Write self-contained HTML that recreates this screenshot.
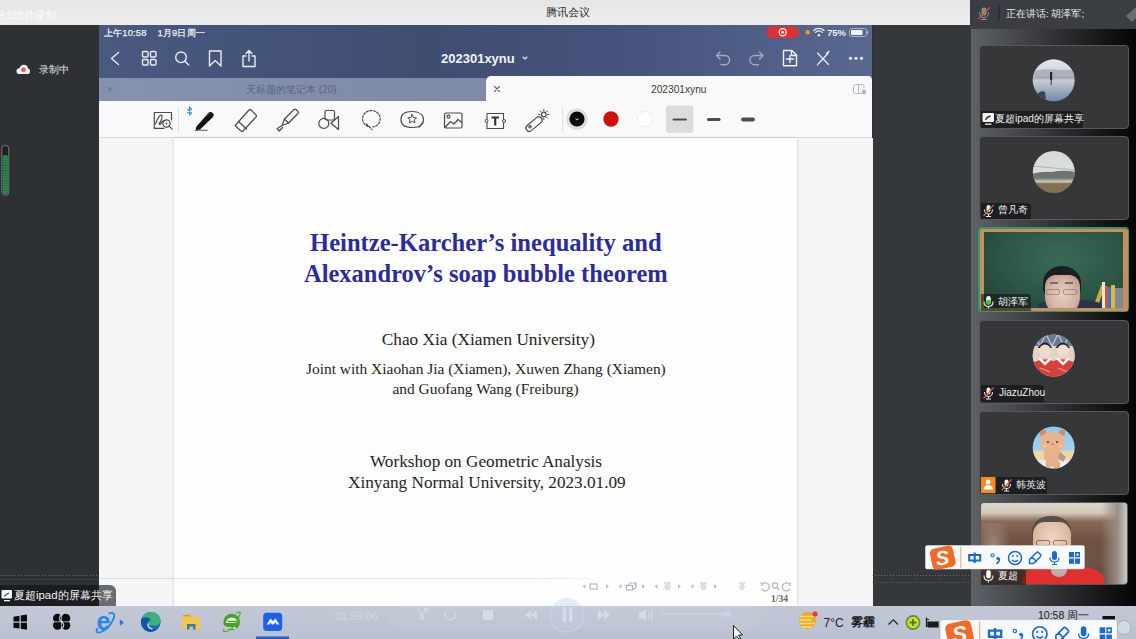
<!DOCTYPE html>
<html><head><meta charset="utf-8">
<style>
*{margin:0;padding:0;box-sizing:border-box}
html,body{width:1136px;height:639px;overflow:hidden;background:#2d3034;font-family:"Liberation Sans",sans-serif}
.a{position:absolute}
svg{position:absolute;overflow:visible}
#topbar{left:0;top:0;width:1136px;height:25px;background:linear-gradient(#e6e6e6,#ededed)}
#leftp{left:0;top:25px;width:99px;height:581px;background:#2e3134}
#nav{left:99px;top:25px;width:773px;height:53px;background:linear-gradient(90deg,#495980,#3f4d71 42%,#44527b 65%,#58688f)}
#tabin{left:99px;top:78px;width:387px;height:23.5px;background:linear-gradient(90deg,#8592ad,#7e8ba7)}
#tabact{left:486px;top:76px;width:386px;height:25px;background:#f9f9fb;border-radius:5px 4px 0 0}
#tool{left:99px;top:101px;width:773px;height:37px;background:#f9f9fb;border-bottom:1px solid #dcdcde}
#canvas{left:99px;top:138px;width:774px;height:468px;background:#f5f5f6}
#page{left:174px;top:138px;width:623px;height:468px;background:#fefefe;box-shadow:0 0 2.5px rgba(0,0,0,.22)}
#gap{left:873px;top:25px;width:98px;height:581px;background:#34383b}
#rhead{left:970px;top:0;width:166px;height:29px;background:#3a3d41}
#rpanel{left:971px;top:28.5px;width:165px;height:577px;background:linear-gradient(90deg,#5e6266,#3a3c3f 40%,#161616 80%,#050505)}
.tl{width:150px;height:84px;background:#363739;border:1px solid #56585c;border-radius:4px}
.lbl{height:16.5px;background:#1d1e20;border-radius:0 4px 0 0}
.lt{font-size:10px;color:#f0f0f0}
#taskbar{left:0;top:606px;width:1136px;height:33px;background:linear-gradient(#c2c8d6,#bac1d1)}
.t{position:absolute;white-space:nowrap;line-height:1}
.serif{font-family:"Liberation Serif",serif}
</style></head><body>
<div id="topbar" class="a"></div>
<div class="t" style="left:-2px;top:10px;font-size:11px;color:#fbfbfb">9.9软件录制</div>
<div class="t" style="left:546px;top:7px;font-size:11px;color:#2a2a2a">腾讯会议</div>

<div id="leftp" class="a"></div>
<div class="t" style="left:39px;top:64.5px;font-size:10px;color:#e4e4e4">录制中</div>
<svg width="1136" height="639" style="left:0;top:0" viewBox="0 0 1136 639">
 <path d="M19.5 74 Q16.5 74 16.5 71.2 Q16.5 68.5 19.5 68.3 Q20.5 64.8 24 64.8 Q27.2 64.8 28 68.2 Q30 68.5 30 71.2 Q30 74 27.5 74 Z" fill="#f4f4f4"/>
 <circle cx="23.5" cy="69.8" r="2.4" fill="#f05a50"/>
 <rect x="1.8" y="145.5" width="7" height="49.5" rx="3.5" fill="#1e2022" stroke="#6d7176" stroke-width="1.1"/>
 <rect x="2.6" y="155" width="5.4" height="39" rx="2.5" fill="#2a8a50"/>
 <g stroke="#164a2a" stroke-width="0.6" opacity="0.7">
  <path d="M3 158 H8 M3 160.5 H8 M3 163 H8 M3 165.5 H8 M3 168 H8 M3 170.5 H8 M3 173 H8 M3 175.5 H8 M3 178 H8 M3 180.5 H8 M3 183 H8 M3 185.5 H8 M3 188 H8 M3 190.5 H8"/>
 </g>
</svg>
<!-- IPAD CHROME -->
<div id="nav" class="a"></div>
<div id="tabin" class="a"></div>
<div id="tabact" class="a"></div>
<div id="tool" class="a"></div>
<div id="canvas" class="a"></div>
<div id="page" class="a"></div>
<div id="slide">
<div class="t serif" id="l1" style="left:310px;top:231px;font-size:24.6px;font-weight:bold;color:#2b2b9e">Heintze-Karcher’s inequality and</div>
<div class="t serif" id="l2" style="left:304px;top:261.6px;font-size:24.5px;font-weight:bold;color:#2b2b9e">Alexandrov’s soap bubble theorem</div>
<div class="t serif" id="l3" style="left:381.8px;top:330.6px;font-size:17.25px;color:#242424">Chao Xia (Xiamen University)</div>
<div class="t serif" id="l4" style="left:306px;top:360.8px;font-size:15.43px;color:#242424">Joint with Xiaohan Jia (Xiamen), Xuwen Zhang (Xiamen)</div>
<div class="t serif" id="l5" style="left:392.5px;top:380.8px;font-size:15.43px;color:#242424">and Guofang Wang (Freiburg)</div>
<div class="t serif" id="l6" style="left:370px;top:453px;font-size:17.2px;color:#242424">Workshop on Geometric Analysis</div>
<div class="t serif" style="left:771px;top:594.5px;font-size:9.5px;font-weight:bold;color:#666">1/34</div>
<svg width="1136" height="639" style="left:0;top:0" viewBox="0 0 1136 639">
 <g fill="#babad2">
  <path d="M585.5 584.3 V588.7 L582.5 586.5 Z"/><path d="M606 584.3 V588.7 L609 586.5 Z"/>
  <path d="M621.5 584.3 V588.7 L618.5 586.5 Z"/><path d="M642 584.3 V588.7 L645 586.5 Z"/>
  <path d="M657.5 584.3 V588.7 L654.5 586.5 Z"/><path d="M678 584.3 V588.7 L681 586.5 Z"/>
  <path d="M693.5 584.3 V588.7 L690.5 586.5 Z"/><path d="M714 584.3 V588.7 L717 586.5 Z"/>
 </g>
 <g fill="none" stroke="#b0b0cc" stroke-width="1.1">
  <rect x="590" y="584" width="7" height="5"/>
  <rect x="626.5" y="585.5" width="6" height="4.5"/><path d="M628 585.5 L630 583 H636 L634.5 585.5 M636 583 V587.5 L632.5 590"/>
  <path d="M664 583 H671 M665 585 H670 M664 587 H671 M665 589 H670" stroke-width=".8"/>
  <path d="M700 583 H707 M701 585 H706 M700 587 H707 M701 589 H706" stroke-width=".8"/>
  <path d="M739 583 H745 M740 585 H744 M739 587 H745 M740 589 H744" stroke-width=".8"/>
  <path d="M763 583.5 A4 4 0 1 1 761.5 588.5"/><path d="M760.5 582.5 L762.5 584 L761 586"/>
  <circle cx="775" cy="585.5" r="2.6"/><path d="M777 587.5 L779.5 590"/>
  <path d="M788.5 583.5 A4 4 0 1 0 790 588.5"/><path d="M791 582.5 L789 584 L790.5 586"/>
 </g>
</svg>
<div class="t serif" id="l7" style="left:348px;top:474px;font-size:17.2px;color:#242424">Xinyang Normal University, 2023.01.09</div>
</div>
<!-- status bar -->
<div class="t" id="sb" style="left:104px;top:28px;font-size:9.4px;color:#eef0f5;letter-spacing:.15px;-webkit-text-stroke:.25px #eef0f5">上午10:58&nbsp;&nbsp;&nbsp; 1月9日周一</div>
<div class="t" style="left:441px;top:52px;font-size:13px;color:#f2f4f8;font-weight:bold">202301xynu</div>
<div class="t" style="left:827px;top:28px;font-size:9.5px;color:#eef0f5;font-weight:bold">75%</div>
<svg width="1136" height="639" style="left:0;top:0" viewBox="0 0 1136 639">
 <g fill="none" stroke="#e9ecf3" stroke-width="1.4" stroke-linecap="round" stroke-linejoin="round">
  <!-- back -->
  <path d="M118.5 52.5 L111.5 58.5 L118.5 64.5"/>
  <!-- grid -->
  <rect x="142.5" y="51.5" width="5.5" height="5.5" rx="1"/>
  <rect x="150.5" y="51.5" width="5.5" height="5.5" rx="1"/>
  <rect x="142.5" y="59.5" width="5.5" height="5.5" rx="1"/>
  <rect x="150.5" y="59.5" width="5.5" height="5.5" rx="1"/>
  <!-- search -->
  <circle cx="181" cy="57.3" r="5.3"/>
  <path d="M185 61.3 L188.8 65"/>
  <!-- bookmark -->
  <path d="M209.5 51 H221 V66 L215.2 60.5 L209.5 66 Z"/>
  <!-- share -->
  <path d="M246 56 H243 V66.5 H255 V56 H252"/>
  <path d="M249 61 V50.5 M246 53.5 L249 50.5 L252 53.5"/>
  <!-- chevron -->
  <path d="M523 57 L525 59 L527 57" stroke-width="1.1"/>
 </g>
 <g fill="none" stroke="#a3abc0" stroke-width="1.4" stroke-linecap="round" stroke-linejoin="round">
  <!-- undo -->
  <path d="M720 52 L716.5 55.5 L720 59 M717 55.5 H725 A4.6 4.6 0 0 1 725 64.7 H721"/>
  <!-- redo -->
  <path d="M759.5 52 L763 55.5 L759.5 59 M762.5 55.5 H754.5 A4.6 4.6 0 0 0 754.5 64.7 H758.5"/>
 </g>
 <g fill="none" stroke="#eef0f6" stroke-width="1.4" stroke-linecap="round" stroke-linejoin="round">
  <!-- new page -->
  <path d="M783.5 50.5 H792 L796.5 55 V65.8 H783.5 Z M791.5 50.5 V55.5 H796.5"/>
  <path d="M790 55.5 V62.5 M786.5 59 H793.5"/>
  <!-- X pen -->
  <path d="M817.5 53 L828.5 64.5" stroke-width="1.2"/>
  <path d="M828 53.5 L818.5 63.5 L817.3 65" stroke-width="1.2"/>
  <path d="M826.5 53.5 L828.8 51.5" stroke-width="1.6"/>
 </g>
 <g fill="#eef0f6">
  <circle cx="850.5" cy="58.3" r="1.6"/><circle cx="856" cy="58.3" r="1.6"/><circle cx="861.5" cy="58.3" r="1.6"/>
 </g>
 <!-- status right -->
 <rect x="766.5" y="26.5" width="32.5" height="11.5" rx="5.75" fill="#e23030"/>
 <circle cx="782.7" cy="32.3" r="3.6" fill="none" stroke="#fff" stroke-width="1.2"/>
 <circle cx="782.7" cy="32.3" r="1.4" fill="#fff"/>
 <circle cx="807.7" cy="32.2" r="2.3" fill="#f29a1d"/>
 <g fill="none" stroke="#eef0f6" stroke-width="1.3" stroke-linecap="round">
  <path d="M813.8 30.5 A7 7 0 0 1 824 30.5"/>
  <path d="M815.6 32.4 A4.4 4.4 0 0 1 822.2 32.4"/>
 </g>
 <circle cx="818.9" cy="35.2" r="1.2" fill="#eef0f6"/>
 <rect x="849.5" y="28.5" width="17" height="8" rx="2.2" fill="none" stroke="#a9b1c6" stroke-width="1"/>
 <rect x="851" y="30" width="11.5" height="5" rx="1" fill="#f4f5f8"/>
 <path d="M867.6 31 V34" stroke="#a9b1c6" stroke-width="1.2"/>
</svg>
<!-- tabs -->
<div class="t" style="left:246px;top:85px;font-size:10px;color:#5b6482">无标题的笔记本 (20)</div>
<div class="t" style="left:651px;top:85px;font-size:10.2px;color:#3a3a3a">202301xynu</div>
<svg width="1136" height="639" style="left:0;top:0" viewBox="0 0 1136 639">
 <g fill="none" stroke-linecap="round">
  <path d="M108 87 L112.5 91.5 M112.5 87 L108 91.5" stroke="#5f6987" stroke-width="1"/>
  <path d="M494.5 86.5 L499.5 91.5 M499.5 86.5 L494.5 91.5" stroke="#666" stroke-width="1.1"/>
  <path d="M860 84.5 H855.5 Q853.5 84.5 853.5 86.5 V91.5 Q853.5 93.5 855.5 93.5 H862 M858.5 84.5 V93.5 M860 84.5 H862 Q864 84.5 864 86.5 V88.5" stroke="#b8b8bc" stroke-width="1"/>
 </g>
 <circle cx="864" cy="92" r="2.3" fill="#b8b8bc"/>
</svg>
<!-- toolbar -->
<svg width="1136" height="639" style="left:0;top:0" viewBox="0 0 1136 639">
 <g fill="none" stroke="#4a4a4c" stroke-width="1.2" stroke-linecap="round" stroke-linejoin="round">
  <!-- sign zoom -->
  <path d="M164 128.3 H154.3 V112.5 H171.5 V120"/>
  <path d="M155.5 124 C158 117 161 113.5 162 116 C163 119 158 124 159.5 124.5 C161 125 162 120 164 121"/>
  <circle cx="166.5" cy="123.5" r="3.6"/>
  <path d="M169.2 126.2 L172.2 129.2"/>
 </g>
 <circle cx="166.5" cy="123.5" r="0.9" fill="#4a4a4c"/>
 <path d="M178.5 107 V133" stroke="#e2e2e4" stroke-width="1"/>
 <!-- bluetooth -->
 <path d="M187.5 109 L191.5 113 L189.5 115 V107 L191.5 109 L187.5 113" fill="none" stroke="#3d8ff2" stroke-width="1.1" stroke-linejoin="round"/>
 <!-- pen -->
 <path d="M196.5 126.5 L208 113.5 Q210.5 111 212.7 113 Q214.8 115 212.5 117.5 L200 129.5 L195.5 130.5 Z" fill="#111"/>
 <path d="M206.5 116 L210 112.3" stroke="#444" stroke-width="1.6"/>
 <path d="M195 130.3 H207.5" stroke="#666" stroke-width="1.1"/>
 <g fill="none" stroke="#4a4a4c" stroke-width="1.2" stroke-linecap="round" stroke-linejoin="round">
  <!-- eraser -->
  <path d="M236 124.5 L249 110 Q250 109 251 110 L256 115 Q257 116 256 117 L243 131 Q242 132 241 131 L235.5 126 Q235 125.3 236 124.5 Z"/>
  <path d="M238.5 121.5 L246.5 129"/>
  <!-- highlighter -->
  <path d="M284.5 119 L294 109.5 Q295 108.6 296 109.5 L298 111.5 Q299 112.5 298 113.5 L288.5 123 Z"/>
  <path d="M284.5 119 L282 125.5 L288.5 123 M282 125.5 L277 128.7 L279.2 131 L282.5 127.5"/>
  <!-- shapes -->
  <rect x="325" y="110.5" width="9.5" height="9.5" rx="1.5"/>
  <circle cx="323.8" cy="123.4" r="5"/>
  <path d="M338.5 116.5 V129.5 L331 123.3 Z"/>
  <!-- lasso -->
  <path d="M368 126.5 A8.8 8.3 0 1 1 373 127 M366.5 124 L372 129.5" stroke-dasharray="2 1.6"/>
  <!-- sticker -->
  <path d="M419.5 126.5 Q423.5 123 423.5 119.5 C423.5 114.5 419 111.5 412 111.5 C405 111.5 401 114.5 401 119.5 C401 124.5 405 127.5 412 127.5 Q416 127.5 419.5 126.5"/>
  <path d="M412.2 114.5 L413.6 117.5 L416.6 117.8 L414.3 119.8 L415 122.9 L412.2 121.3 L409.4 122.9 L410.1 119.8 L407.8 117.8 L410.8 117.5 Z" stroke-width="1"/>
  <path d="M419 127 L423 123"/>
  <!-- image -->
  <rect x="444.5" y="113" width="17.5" height="15" rx="1.5"/>
  <circle cx="448.5" cy="116.7" r="1.5"/>
  <path d="M445 127.5 L450.5 121.5 L454 124 L458 119.5 L461.8 122.5"/>
  <!-- text box -->
  <path d="M487 113.5 H503.5 V128.5 H487 Z" stroke-width="1.1"/>
 </g>
 <circle cx="486.5" cy="121" r="1.5" fill="#f9f9fb" stroke="#4a4a4c" stroke-width="1"/>
 <circle cx="504" cy="121" r="1.5" fill="#f9f9fb" stroke="#4a4a4c" stroke-width="1"/>
 <path d="M491.5 117.5 H499 M495.2 117.5 V125.5" stroke="#333" stroke-width="2.1"/>
 <g fill="none" stroke="#4a4a4c" stroke-width="1.2" stroke-linecap="round" stroke-linejoin="round">
  <!-- laser -->
  <rect x="524.5" y="120.8" width="19" height="6.6" rx="3.3" transform="rotate(-40 534 124.1)"/>
  <circle cx="530" cy="126.8" r="1.2"/>
  <circle cx="543.8" cy="114.5" r="2.3"/>
  <path d="M543.8 109.5 V110.8 M543.8 118.2 V119.5 M538.8 114.5 H540.1 M547.5 114.5 H548.8 M540.3 111 L541.2 111.9 M546.4 117.1 L547.3 118 M547.3 111 L546.4 111.9 M541.2 117.1 L540.3 118" stroke-width="1"/>
 </g>
 <path d="M562.6 106 V133" stroke="#e0e0e2" stroke-width="1"/>
 <!-- colors -->
 <circle cx="577" cy="119" r="10.8" fill="#dedee0"/>
 <circle cx="577" cy="119" r="7.6" fill="#0a0a0a"/>
 <path d="M575.4 118.6 L577 120.1 L578.6 118.6" fill="none" stroke="#ddd" stroke-width="1"/>
 <circle cx="611" cy="119" r="7.7" fill="#d10f0f"/>
 <circle cx="645" cy="119" r="7.6" fill="#fff" stroke="#ececee" stroke-width="1"/>
 <rect x="666" y="105.5" width="27.3" height="27.5" rx="3" fill="#dcdcde"/>
 <path d="M673.5 119.5 H686" stroke="#4c4c4e" stroke-width="2" stroke-linecap="round"/>
 <path d="M708.5 119.5 H719" stroke="#4c4c4e" stroke-width="3.2" stroke-linecap="round"/>
 <path d="M743 119.5 H753" stroke="#4c4c4e" stroke-width="3.8" stroke-linecap="round"/>
</svg>

<div id="gap" class="a"></div>
<div id="rhead" class="a"></div>
<div class="t" id="hdr" style="left:1006px;top:8.5px;font-size:9.8px;color:#ececec">正在讲话: 胡泽军;</div>
<svg width="1136" height="639" style="left:0;top:0" viewBox="0 0 1136 639">
 <rect x="981.5" y="7.5" width="5" height="8" rx="2.5" fill="#8a8d92"/>
 <path d="M979.5 12 Q979.5 17.5 984 17.5 Q988.5 17.5 988.5 12 M984 17.5 V19.5 M981 19.5 H987" fill="none" stroke="#8a8d92" stroke-width="1"/>
 <path d="M978.5 19 L989.5 7.5" stroke="#d0583a" stroke-width="1.3"/>
 <path d="M999 5.5 V21" stroke="#26282b" stroke-width="1.2"/>
 <path d="M1136 7 L1126 16 L1132 22 L1136 18 Z" fill="#6a6d72"/>
</svg>
<div id="rpanel" class="a"></div>
<!-- tiles -->
<div class="a" style="left:0;top:575px;width:99px;height:1px;background:repeating-linear-gradient(90deg,rgba(150,155,160,.5) 0 1px,transparent 1px 3px)"></div>
<div class="a" style="left:0;top:579px;width:99px;height:1px;background:rgba(60,80,110,.6)"></div>
<div class="a" style="left:872px;top:575px;width:99px;height:1px;background:repeating-linear-gradient(90deg,rgba(150,155,160,.55) 0 1px,transparent 1px 3px)"></div>
<div class="a" style="left:872px;top:582px;width:99px;height:1px;background:repeating-linear-gradient(90deg,rgba(150,155,160,.45) 0 1px,transparent 1px 3px)"></div>
<div class="a tl" style="left:979px;top:44.5px"></div>
<div class="a tl" style="left:979px;top:136px"></div>
<div class="a tl" style="left:979px;top:319.5px"></div>
<div class="a tl" style="left:979px;top:411px"></div>
<div class="a" style="left:978.3px;top:227.3px;width:151px;height:85px;border:2px solid #2d9c6c;border-radius:4px;background:#c98d5c"></div>
<div class="a" style="left:980.4px;top:502.4px;width:148px;height:83px;border:1px solid #54575b;border-radius:4px;overflow:hidden;background:#6e5444">
 <div class="a" style="left:0;top:0;width:148px;height:83px;background:linear-gradient(#dcd6cc 0,#d2c8b8 12%,#8a6a58 22%,#6e5242 45%,#6a5446 70%,#5a4a40 100%)"></div>
 <div class="a" style="left:120px;top:0;width:28px;height:83px;background:linear-gradient(90deg,rgba(120,110,105,0),#9a8e88 60%,#d8d4d0)"></div>
 <div class="a" style="left:0;top:20px;width:30px;height:60px;background:radial-gradient(ellipse at 40% 40%,#a2887a,rgba(110,82,66,0) 70%)"></div>
 <div class="a" style="left:41px;top:62px;width:82px;height:30px;border-radius:45% 45% 0 0;background:#e0302e"></div>
 <div class="a" style="left:70px;top:60px;width:16px;height:14px;border-radius:0 0 50% 50%;background:#b8aeb0"></div>
 <div class="a" style="left:51px;top:13px;width:39px;height:30px;border-radius:48% 48% 30% 30%;background:#585048"></div>
 <div class="a" style="left:52px;top:19px;width:38px;height:42px;border-radius:30% 30% 45% 45%;background:radial-gradient(ellipse at 50% 40%,#eed6c4,#dcb8a0 65%,#c09078)"></div>
 <div class="a" style="left:55px;top:36.5px;width:14px;height:6px;border:1px solid rgba(60,50,50,.55);border-radius:2px"></div>
 <div class="a" style="left:72px;top:36.5px;width:14px;height:6px;border:1px solid rgba(60,50,50,.55);border-radius:2px"></div>
</div>
<div class="a" style="left:981px;top:229.5px;width:147px;height:81px;background:#c98e5e"></div>
<div class="a" style="left:984.3px;top:232.2px;width:139px;height:76.2px;background:radial-gradient(ellipse at 55% 35%,#386a58,#2c5646 55%,#213f34);overflow:hidden">
 <div class="a" style="left:113px;top:53px;width:4px;height:24px;background:#d4a93a;transform:rotate(20deg)"></div>
 <div class="a" style="left:118px;top:50px;width:3px;height:27px;background:#e8e4da"></div>
 <div class="a" style="left:121px;top:54px;width:3px;height:23px;background:#c45a48"></div>
 <div class="a" style="left:124px;top:55px;width:3px;height:22px;background:#3a78b8"></div>
 <div class="a" style="left:127px;top:53px;width:4px;height:24px;background:#e0b840"></div>
 <div class="a" style="left:131px;top:56px;width:8px;height:21px;background:#808890"></div>
 <div class="a" style="left:54px;top:68px;width:64px;height:12px;border-radius:40% 40% 0 0;background:#2c3248"></div>
 <div class="a" style="left:58.5px;top:33.5px;width:38.5px;height:34px;border-radius:50% 50% 35% 35%;background:#1c1e24"></div>
 <div class="a" style="left:60.5px;top:43px;width:35px;height:40px;border-radius:30% 30% 45% 45%;background:radial-gradient(ellipse at 50% 50%,#e8d0c2,#d4b4a4 55%,#b08a7a)"></div>
 <div class="a" style="left:62px;top:56.5px;width:14px;height:6px;border:1px solid rgba(70,70,80,.4);border-radius:2px"></div>
 <div class="a" style="left:79px;top:56.5px;width:14px;height:6px;border:1px solid rgba(70,70,80,.4);border-radius:2px"></div>
 <div class="a" style="left:66px;top:50px;width:8px;height:1.5px;background:rgba(40,40,40,.5)"></div>
 <div class="a" style="left:81px;top:50px;width:8px;height:1.5px;background:rgba(40,40,40,.5)"></div>
</div>
<svg width="1136" height="639" style="left:0;top:0" viewBox="0 0 1136 639">
 <defs>
  <clipPath id="c1"><circle cx="1053.7" cy="80.3" r="21"/></clipPath>
  <clipPath id="c2"><circle cx="1053.8" cy="172" r="21"/></clipPath>
  <clipPath id="c4"><circle cx="1053.7" cy="355.5" r="21"/></clipPath>
  <clipPath id="c5"><circle cx="1053.7" cy="447.5" r="21"/></clipPath>
  <linearGradient id="g1" x1="0" y1="0" x2="0" y2="1"><stop offset="0" stop-color="#e2e4e8"/><stop offset=".35" stop-color="#d0d4da"/><stop offset=".45" stop-color="#a8b0bc"/><stop offset=".5" stop-color="#c8ccd2"/><stop offset="1" stop-color="#6f88a6"/></linearGradient>
  <linearGradient id="g2" x1="0" y1="0" x2="0" y2="1"><stop offset="0" stop-color="#d6d8da"/><stop offset=".5" stop-color="#dcdedf"/><stop offset=".58" stop-color="#8c9090"/><stop offset=".66" stop-color="#7a8478"/><stop offset=".72" stop-color="#c8c8c0"/><stop offset=".8" stop-color="#8a8060"/><stop offset="1" stop-color="#9a7050"/></linearGradient>
  <linearGradient id="g5" x1="0" y1="0" x2="0" y2="1"><stop offset="0" stop-color="#8cc8ee"/><stop offset=".55" stop-color="#9fd2ef"/><stop offset=".6" stop-color="#f2d6a0"/><stop offset=".78" stop-color="#f0d8a8"/><stop offset=".8" stop-color="#e6e8ee"/><stop offset="1" stop-color="#f4f4f6"/></linearGradient>
 </defs>
 <circle cx="1053.7" cy="80.3" r="21" fill="url(#g1)"/>
 <g clip-path="url(#c1)">
  <path d="M1030 72 Q1045 68 1060 70 Q1070 69 1080 72 V76 H1030 Z" fill="#a9b2bd"/>
  <path d="M1035 77 H1080" stroke="#8a8e92" stroke-width="0.8"/>
  <rect x="1050" y="72" width="2.2" height="8" fill="#2a2a2e"/>
  <rect x="1050.5" y="80" width="1.5" height="5" fill="#5a6070"/>
  <path d="M1038 93 Q1042 90 1045 92 L1046 100 L1038 102 Z" fill="#3a4350"/>
 </g>
 <circle cx="1053.8" cy="172" r="21" fill="url(#g2)"/>
 <g clip-path="url(#c2)">
  <path d="M1030 175 Q1040 171 1052 172 Q1065 169 1080 173 V178 H1030 Z" fill="#6e7470"/>
  <path d="M1030 183 H1080 V195 H1030 Z" fill="#7a6a48" opacity=".6"/>
  <path d="M1032 166 L1075 170" stroke="#888" stroke-width=".5"/>
 </g>
 <circle cx="1053.7" cy="355.5" r="21" fill="#e8d8d0"/>
 <g clip-path="url(#c4)">
  <rect x="1030" y="333" width="50" height="16" fill="#6a7898"/>
  <path d="M1034 334 L1040 346 L1046 334 L1052 346 L1058 334 L1064 346 L1070 334 L1076 346" fill="none" stroke="#b8c0d0" stroke-width="1.4"/>
  <rect x="1030" y="346" width="50" height="14" fill="#e2d2c4"/>
  <path d="M1037.5 348 Q1045 337 1052 348" fill="#2a2220"/>
  <path d="M1055.5 348 Q1063 337 1070 348" fill="#2a2220"/>
  <ellipse cx="1045" cy="351" rx="6" ry="6.5" fill="#f0dccc"/>
  <ellipse cx="1063" cy="351" rx="6" ry="6.5" fill="#f0dccc"/>
  <path d="M1034 362 Q1045 357 1053 361 V380 H1032 Z" fill="#d8403a"/>
  <path d="M1053 361 Q1063 357 1074 362 L1078 380 H1053 Z" fill="#d8403a"/>
  <path d="M1039 358 L1045 364 L1051 358 M1057 358 L1063 364 L1069 358" stroke="#f6f2f0" stroke-width="2.5" fill="none"/>
  <path d="M1040 368 L1050 372 M1058 368 L1068 372" stroke="#f0e0d0" stroke-width="1.2" opacity=".6"/>
 </g>
 <circle cx="1053.7" cy="447.5" r="21" fill="url(#g5)"/>
 <g clip-path="url(#c5)">
  <path d="M1046 462 Q1044 470 1048 470 L1052 466 L1056 470 Q1061 470 1060 462 Z" fill="#e2ad88"/>
  <ellipse cx="1052.5" cy="455" rx="9" ry="9" fill="#e6b28e"/>
  <path d="M1060 452 L1066 457 L1063 462 L1058 458 Z" fill="#b89a80"/>
  <circle cx="1043" cy="433" r="3.2" fill="#c8906c"/>
  <circle cx="1062" cy="433" r="3.2" fill="#c8906c"/>
  <ellipse cx="1052.5" cy="442" rx="12.5" ry="10.5" fill="#e8b48e"/>
  <ellipse cx="1044.5" cy="446" rx="2.3" ry="1.8" fill="#f6c08a"/>
  <ellipse cx="1060.5" cy="446" rx="2.3" ry="1.8" fill="#f6c08a"/>
  <circle cx="1048" cy="442" r="0.9" fill="#3a2a24"/>
  <circle cx="1057" cy="442" r="0.9" fill="#3a2a24"/>
  <path d="M1051.5 444 H1053.5" stroke="#5a3a2a" stroke-width=".6"/>
 </g>
</svg>
<!-- labels -->
<div class="a lbl" style="left:980.5px;top:111px;width:102px"></div>
<div class="a lbl" style="left:981px;top:202.5px;width:50px"></div>
<div class="a lbl" style="left:981px;top:294px;width:50px;background:rgba(20,22,22,.6)"></div>
<div class="a lbl" style="left:981px;top:385px;width:63px"></div>
<div class="a lbl" style="left:995px;top:477px;width:52px"></div>
<div class="a lbl" style="left:981px;top:568.5px;width:45px;background:rgba(30,20,20,.55)"></div>
<div class="t lt" style="left:995px;top:113.5px">夏超ipad的屏幕共享</div>
<div class="t lt" style="left:998px;top:205px">曾凡奇</div>
<div class="t lt" style="left:998px;top:296.5px">胡泽军</div>
<div class="t lt" style="left:999px;top:388px;font-size:10px">JiazuZhou</div>
<div class="t lt" style="left:1016px;top:479.5px">韩英波</div>
<div class="t lt" style="left:998px;top:571px">夏超</div>
<svg width="1136" height="639" style="left:0;top:0" viewBox="0 0 1136 639">
 <!-- screen share icon -->
 <rect x="982.5" y="113" width="11.5" height="9" rx="1" fill="#f2f2f2"/>
 <path d="M985.5 120 Q987 116.5 990.5 116" stroke="#333" stroke-width="1.3" fill="none"/>
 <rect x="985" y="123.5" width="6.5" height="1.3" fill="#f2f2f2"/>
 <!-- muted mics -->
 <g id="mm">
 <rect x="986.5" y="205" width="4" height="7" rx="2" fill="#f0f0f0"/>
 <path d="M984.5 209.5 Q984.5 214 988.5 214 Q992.5 214 992.5 209.5 M988.5 214 V216 M986 216.5 H991" fill="none" stroke="#f0f0f0" stroke-width="1"/>
 <path d="M983.5 216 L993.5 205" stroke="#d85a3c" stroke-width="1.2"/>
 </g>
 <use href="#mm" x="0" y="182.5"/>
 <use href="#mm" x="18" y="274.5"/>
 <!-- green mic -->
 <rect x="986.2" y="296" width="4.6" height="8.5" rx="2.3" fill="#f4f4f4"/>
 <rect x="986.2" y="300" width="4.6" height="4.5" rx="1.5" fill="#3ec43e"/>
 <path d="M984 301.5 Q984 306.5 988.5 306.5 Q993 306.5 993 301.5 M988.5 306.5 V308.5" fill="none" stroke="#f0f0f0" stroke-width="1.1"/>
 <!-- white mic -->
 <rect x="986.2" y="570" width="4.6" height="8.5" rx="2.3" fill="#f4f4f4"/>
 <path d="M984 575.5 Q984 580.5 988.5 580.5 Q993 580.5 993 575.5 M988.5 580.5 V582.5" fill="none" stroke="#f0f0f0" stroke-width="1.1"/>
 <!-- orange user -->
 <rect x="981" y="477" width="14.5" height="16" fill="#f28c1c"/>
 <circle cx="988.2" cy="482" r="2.4" fill="#fff"/>
 <path d="M983.5 489.5 Q984 485 988.2 485 Q992.5 485 993 489.5 Z" fill="#fff"/>
</svg>
<div id="taskbar" class="a"></div>
<!-- bottom-left share label -->
<div class="a" style="left:0;top:585px;width:116px;height:21px;background:#6a6b6d;border-radius:0 6px 0 0"></div>
<div class="a" style="left:0;top:585px;width:99px;height:21px;background:#1c1d1f"></div>
<div class="t" style="left:14px;top:589.5px;font-size:11.4px;color:#f4f4f4">夏超ipad的屏幕共享</div>
<svg width="1136" height="639" style="left:0;top:0" viewBox="0 0 1136 639">
 <rect x="1.5" y="590" width="10.5" height="8.5" rx="1" fill="#f4f4f4"/>
 <path d="M4.5 596.5 Q6 593.5 9 593" stroke="#333" stroke-width="1.2" fill="none"/>
 <rect x="4" y="600" width="6" height="1.3" fill="#f4f4f4"/>
</svg>
<!-- media overlay -->
<div class="a" style="left:99px;top:578px;width:511px;height:1px;background:linear-gradient(90deg,rgba(170,200,235,.5),rgba(170,200,235,.5) 85%,rgba(170,200,235,0))"></div>
<div class="a" style="left:390px;top:604px;width:372px;height:25px;border-radius:12px;background:rgba(220,226,236,.08);border:1px solid rgba(230,235,245,.06)"></div>
<div class="t" style="left:335px;top:611px;font-size:11px;color:#d2d7e1">01:59:06</div>
<svg width="1136" height="639" style="left:0;top:0" viewBox="0 0 1136 639">
 <circle cx="567" cy="615" r="17" fill="rgba(190,205,230,.35)" stroke="rgba(235,240,250,.35)" stroke-width="1"/>
 <g fill="#d6dce7">
  <rect x="562.5" y="607" width="3.5" height="15" rx="1"/><rect x="569" y="607" width="3.5" height="15" rx="1"/>
  <path d="M537 610 V620 L531 615 Z M531 610 V620 L525 615 Z"/>
  <path d="M598 610 V620 L604 615 Z M604 610 V620 L610 615 Z"/>
  <rect x="483" y="610" width="10" height="10"/>
  <path d="M639 612 H642 L646 609 V621 L642 618 H639 Z"/>
  <circle cx="728" cy="614" r="3.5" fill="#c8d4e6"/>
 </g>
 <g fill="none" stroke="#d6dce7" stroke-width="1.3">
  <path d="M648.5 612 Q650 615 648.5 618 M651 610 Q653.5 615 651 620"/>
  <path d="M446.5 611.5 A5 5 0 1 0 455 613"/>
  <path d="M418 609 L424 620 M426 609 L420 620 M424 609 H427 V612"/>
  <path d="M660 614 H725" stroke="#cfd8e6" stroke-width="1.2"/>
 </g>
 <!-- cursor -->
 <path d="M733.5 625.5 V639 L736.5 636 L739 639 H741 L738.5 635 H742.5 Z" fill="#fff" stroke="#222" stroke-width="1"/>
 <!-- taskbar icons -->
 <path d="M13.5 616.8 L19.5 615.8 V621.6 H13.5 Z M20.8 615.6 L27 614.6 V621.6 H20.8 Z M13.5 622.8 H19.5 V628.6 L13.5 627.8 Z M20.8 622.8 H27 V629.7 L20.8 628.8 Z" fill="#0c0c0c"/>
 <g fill="#0c0c0c">
  <circle cx="57.5" cy="618.3" r="4.5"/><circle cx="65.8" cy="618.3" r="4.5"/>
  <circle cx="57.5" cy="625.3" r="4.5"/><circle cx="65.8" cy="625.3" r="4.5"/>
 </g>
 <path d="M53 621.8 H70 M61.6 613 V630.5" stroke="#c6cbd6" stroke-width="0.8" fill="none"/><path d="M61.6 614 Q57.5 619 61.6 621.8 Q66 624.5 61.6 629.5" stroke="#c6cbd6" stroke-width="1.2" fill="none"/>
 <!-- IE -->
 <text x="96.5" y="630" font-family="Liberation Sans" font-weight="bold" font-size="25" fill="#2a86e6">e</text>
 <path d="M97.5 628 Q94.5 634 101 632 Q109 628.5 113.5 619 Q116.5 611 108.5 613.5" fill="none" stroke="#2a86e6" stroke-width="1.8"/>
 <path d="M119.8 619.3 V626 L124 622.6 Z" fill="#2a78e0"/>
 <!-- edge -->
 <circle cx="150.7" cy="622" r="9.9" fill="#1769c0"/>
 <path d="M142 618 Q144.5 612 151 612 Q159 612 160.6 619.5 Q161 624.5 156.5 625.5 H150.5 Q147.5 625.5 147.8 623 Q148.5 620.5 152 620.3 Q146 617 142 618 Z" fill="#3fb07a"/>
 <path d="M142 618 Q146 616.5 150 618.5 L147.5 623 Q146 628.5 151.5 629.5 Q155.5 630 158 627.5 Q155 631.8 150.7 631.9 Q143 631.5 141 623.5 Q140.8 620.5 142 618 Z" fill="#0f58a8"/>
 <path d="M147.8 623.5 Q148 628.5 152.5 628.8" stroke="#dfeefa" stroke-width="1.2" fill="none"/>
 <!-- folder -->
 <path d="M182.5 616.5 Q182.5 615 184 615 H189.5 L191.5 617 H199 Q200 617 200 618 V628.5 Q200 629.6 199 629.6 H183.5 Q182.5 629.6 182.5 628.5 Z" fill="#f3c64c"/>
 <path d="M182.5 616.5 Q182.5 615 184 615 H189.5 L191 616.5 H182.5 Z" fill="#d9982a"/>
 <path d="M187 624 H195.5 V629.6 H193 V626.5 H189.5 V629.6 H187 Z" fill="#2a78c8"/>
 <!-- green IE -->
 <circle cx="231.7" cy="622" r="8.3" fill="#4a9e2a"/>
 <path d="M226 623 H237.5 Q237 617.5 231.7 617.5 Q226.5 617.8 226 623 Z" fill="#e8f4e0"/>
 <path d="M227.5 621.5 H236" stroke="#4a9e2a" stroke-width="1.4"/>
 <path d="M225 626.5 Q226 628 230 628 H236" stroke="#e8f4e0" stroke-width="1.3" fill="none"/>
 <path d="M224 629 Q222 633 228 631 Q236 627 240 614 Q241 611 236 613" fill="none" stroke="#5aaa3a" stroke-width="1.3"/>
 <!-- tencent meeting -->
 <rect x="263.2" y="612.7" width="19" height="18.3" rx="3.5" fill="#1d5fe6"/>
 <path d="M266.5 624.5 L270.5 618.5 L273 621 L275.5 618.5 L279.5 624.5 H276.5 L275.5 622.5 L273.5 624.5 H272 L270.5 622.5 L269.5 624.5 Z" fill="#f2f6ff"/>
 <rect x="256" y="636.5" width="33" height="2.5" fill="#2860c4"/>
 <!-- weather -->
 <circle cx="807.5" cy="620.5" r="8.5" fill="#f0a828"/>
 <path d="M800 616.5 H814 M799.5 620 H812 M800 623.5 H815 M802 627 H812" stroke="#fbe07a" stroke-width="1.3"/>
 <circle cx="815" cy="614" r="2.6" fill="#e83a2a"/>
 <!-- tray -->
 <path d="M888.5 624.5 L893.3 619.8 L898 624.5" fill="none" stroke="#222" stroke-width="1.3"/>
 <circle cx="913" cy="622.5" r="6.6" fill="#f0d020" stroke="#3aa040" stroke-width="1.6"/>
 <path d="M913 619 V626 M909.5 622.5 H916.5" stroke="#2a8a30" stroke-width="1.8"/>
 <path d="M926.5 617.5 V627 M926.5 619.5 H929 M928 622 H938 V627 H928 Z" stroke="#1a1a1a" stroke-width="1.2" fill="#1a1a1a"/>
 <rect x="1102.5" y="616" width="12.5" height="3.5" fill="#111"/>
 <circle cx="1124" cy="627.5" r="7" fill="#d4d8e0" stroke="#a9aeb8" stroke-width="1"/>
</svg>
<div class="t" style="left:823.5px;top:616.5px;font-size:12px;color:#1e1e1e">7°C</div>
<div class="t" style="left:850.5px;top:616.5px;font-size:11.5px;color:#1e1e1e;font-weight:bold">雾霾</div>
<div class="t" style="left:1038px;top:609.5px;font-size:10.5px;color:#222">10:58 周一</div>
<!-- sogou bars -->
<svg width="1136" height="639" style="left:0;top:0" viewBox="0 0 1136 639">
 <defs>
  <g id="sg">
   <rect x="925.2" y="545.2" width="159.5" height="24" rx="2" fill="#f8f9fb" stroke="rgba(0,0,0,.08)" stroke-width="1"/>
   <rect x="931" y="547" width="23.5" height="21.5" rx="4.5" fill="#f06a28" transform="rotate(-12 942.7 557.8)"/>
   <text x="942.5" y="565" text-anchor="middle" font-family="Liberation Sans" font-weight="bold" font-style="italic" font-size="20" fill="#fff" transform="rotate(-8 942.5 558)">S</text>
   <path d="M960.8 547 V568" stroke="#f4a078" stroke-width="1"/>
   <path d="M969.2 555 H980.2 V560.5 H969.2 Z M974.7 552.5 V563" fill="none" stroke="#1a6ad4" stroke-width="2.1"/>
   <circle cx="992.5" cy="555.3" r="1.5" fill="none" stroke="#1a6ad4" stroke-width="1.1"/>
   <circle cx="998" cy="558.5" r="1.6" fill="#1a6ad4"/>
   <path d="M999.3 558.8 Q999.5 562 996.8 563.5" stroke="#1a6ad4" stroke-width="1.5" fill="none" stroke-linecap="round"/>
   <circle cx="1015" cy="558" r="6.5" fill="none" stroke="#1a6ad4" stroke-width="1.5"/>
   <path d="M1012 560 Q1015 563 1018 560" fill="none" stroke="#1a6ad4" stroke-width="1.3"/>
   <path d="M1012.8 555 V557 M1017.2 555 V557" stroke="#1a6ad4" stroke-width="1.4"/>
   <path d="M1029.5 563.5 V559.5 L1036.5 552.5 Q1037.5 551.5 1038.5 552.5 L1040.5 554.5 Q1041.5 555.5 1040.5 556.5 L1033.5 563.5 Z M1032 557 L1037 562" fill="none" stroke="#1a6ad4" stroke-width="1.5" stroke-linejoin="round"/>
   <rect x="1052" y="551" width="5" height="9" rx="2.5" fill="#1a6ad4"/>
   <path d="M1050 557.5 Q1050 562 1054.5 562 Q1059 562 1059 557.5 M1054.5 562 V564.5 M1052 564.5 H1057" fill="none" stroke="#1a6ad4" stroke-width="1.2"/>
   <rect x="1069" y="552" width="5" height="5.3" fill="#1a6ad4"/><rect x="1075" y="552" width="5" height="5.3" fill="#1a6ad4"/>
   <rect x="1069" y="558.5" width="5" height="5.3" fill="#1a6ad4"/><rect x="1075" y="558.5" width="5" height="5.3" fill="#1a6ad4"/>
   <circle cx="1077.5" cy="554.6" r="1.2" fill="#fff"/>
  </g>
 </defs>
 <use href="#sg"/>
 <use href="#sg" transform="translate(940.2 619.8) scale(1.109) translate(-925.2 -545.2)"/>
</svg>

</body></html>
